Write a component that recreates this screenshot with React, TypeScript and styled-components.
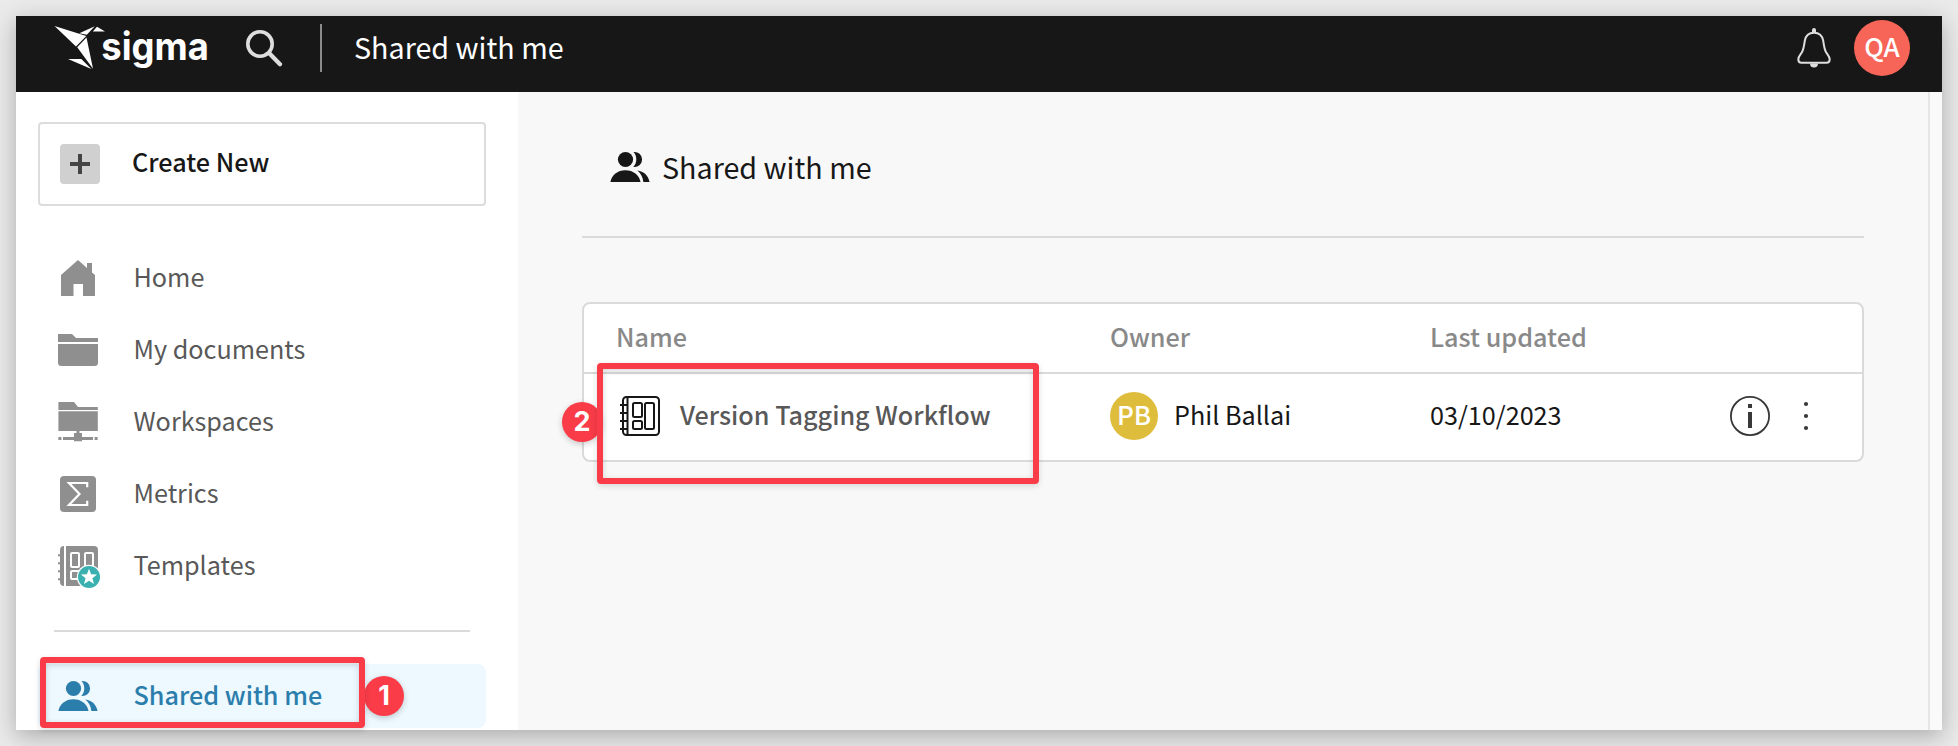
import React from "react";
import styled, { createGlobalStyle, css } from "styled-components";

const GlobalStyle = createGlobalStyle`
  *, *::before, *::after { box-sizing: border-box; }
  body {
    margin: 0;
    background: #eaeaea;
    color: #171717;
    font-family: "Noto Sans CJK SC", "Open Sans", sans-serif;
    font-size: 25.2px;
    line-height: 36px;
  }
  svg { display: block; flex: none; }
`;

const Page = styled.div`
  height: 746px;
  padding: 16px;
  overflow: hidden;
`;

const Window = styled.div`
  display: flex;
  flex-direction: column;
  height: 714px;
  background: #fff;
  box-shadow: 0 6px 22px rgba(0, 0, 0, 0.27);
`;

const TopBar = styled.header`
  display: flex;
  align-items: center;
  flex: none;
  height: 76px;
  padding: 0 32px 12px 38px;
  background: #171717;
  color: #fff;
`;

const Logo = styled.svg`
  margin-right: 30px;
  overflow: visible;
`;

const LogoText = styled.text`
  font-family: Inter, sans-serif;
  font-weight: 700;
  font-size: 38px;
  fill: #fff;
`;

const BarDivider = styled.div`
  width: 2px;
  height: 48px;
  margin: 0 32px 0 37px;
  background: #8b8b8b;
`;

const Title = styled.h1`
  margin: 0;
  padding-bottom: 3px;
  font-size: 28.7px;
  font-weight: 400;
  line-height: 42px;
`;

const PageTitle = styled(Title)`
  padding-bottom: 0;
`;

const Actions = styled.div`
  display: flex;
  align-items: center;
  gap: 23px;
  margin-left: auto;
`;

const Avatar = styled.div<{ $size: number; $color: string; $font: number }>`
  display: flex;
  align-items: center;
  justify-content: center;
  flex: none;
  width: ${(p) => p.$size}px;
  height: ${(p) => p.$size}px;
  padding-bottom: 4px;
  border-radius: 50%;
  background: ${(p) => p.$color};
  color: #fff;
  font-size: ${(p) => p.$font}px;
  font-weight: 500;
`;

const Body = styled.div`
  display: flex;
  flex: 1;
`;

const Sidebar = styled.aside`
  width: 502px;
  padding: 30px 32px 0 22px;
`;

const Label = styled.span`
  padding-bottom: 4px;
  white-space: nowrap;
`;

const CreateButton = styled.button`
  display: flex;
  align-items: center;
  gap: 32px;
  width: 100%;
  height: 84px;
  padding: 0 20px;
  border: 2px solid #dcdcdc;
  border-radius: 4px;
  background: #fff;
  color: #171717;
  font: inherit;
  font-weight: 500;

  ${Label} {
    padding-bottom: 6px;
  }
`;

const NavList = styled.nav`
  display: flex;
  flex-direction: column;
  gap: 8px;
  margin-top: 40px;
`;

const NavItem = styled.div<{ $active?: boolean }>`
  position: relative;
  display: flex;
  align-items: center;
  gap: 35.5px;
  height: 64px;
  padding-left: 20px;
  border-radius: 8px;
  color: #585858;
  ${(p) =>
    p.$active &&
    css`
      background: #edf8ff;
      color: #2b7eab;
      font-weight: 500;
    `}
`;

const Icon = styled.svg`
  overflow: visible;
`;

const NavDivider = styled.hr`
  height: 2px;
  margin: 32px 16px 32px;
  border: 0;
  background: #dadada;
`;

const Content = styled.main`
  flex: 1;
  padding: 48px 64px 0;
  border-right: 2px solid #e6e6e6;
  background: #f8f8f8;
`;

const Gutter = styled.div`
  width: 12px;
  background: #fafafa;
`;

const PageHead = styled.div`
  display: flex;
  align-items: center;
  gap: 12px;
  height: 98px;
  padding: 0 0 42px 28px;
  border-bottom: 2px solid #dadada;
`;

const Table = styled.div`
  margin-top: 64px;
  border: 2px solid #dadada;
  border-radius: 8px;
  background: #fff;
`;

const Row = styled.div<{ $head?: boolean }>`
  display: grid;
  grid-template-columns: 494px 320px 300px 1fr;
  align-items: center;
  padding-left: 32px;
  ${(p) =>
    p.$head
      ? css`
          height: 70px;
          border-bottom: 2px solid #dadada;
          color: #898989;
          font-weight: 500;
        `
      : css`
          height: 86px;
          padding-bottom: 2px;
        `}
`;

const Cell = styled.div<{ $gap: number; $indent?: number }>`
  position: relative;
  display: flex;
  align-items: center;
  gap: ${(p) => p.$gap}px;
  padding-left: ${(p) => p.$indent ?? 0}px;
`;

const DocName = styled(Label)`
  color: #585858;
  font-weight: 500;
`;

const Highlight = styled.div<{ $x: number; $y: number; $w: number; $h: number }>`
  position: absolute;
  left: ${(p) => p.$x}px;
  top: ${(p) => p.$y}px;
  width: ${(p) => p.$w}px;
  height: ${(p) => p.$h}px;
  border: 6px solid #f93c48;
  border-radius: 4px;
  box-shadow: 0 2px 6px rgba(0, 0, 0, 0.14), inset 0 2px 6px rgba(0, 0, 0, 0.16);
`;

const Step = styled.div<{ $x: number; $y: number }>`
  position: absolute;
  left: ${(p) => p.$x}px;
  top: ${(p) => p.$y}px;
  width: 40px;
  height: 40px;
  border-radius: 50%;
  background: #f93c48;
  box-shadow: 0 2px 6px rgba(0, 0, 0, 0.2);
  color: #fff;
  font: 700 27px/39px Inter, sans-serif;
  text-align: center;
`;

const PeopleIcon = () => (
  <Icon width="40" height="40" viewBox="0 0 40 40" fill="currentColor">
    <circle cx="15.500" cy="12.500" r="7.600" />
    <path d="M23.500 5.100a7.500 7.500 0 1 1-.2 14.800c2-2 3-4.500 3-7.400s-1-5.400-2.800-7.400Z" />
    <path d="M.4 35C1.600 28 7.500 23.200 15.400 23.200S29.300 28 30.500 35Z" />
    <path d="M27.300 23.400c6.500.6 11 5 12.300 11.600h-6.200c-.6-5-2.600-8.800-6.100-11.600Z" />
  </Icon>
);

const HomeIcon = () => (
  <Icon width="40" height="40" viewBox="0 0 40 40" fill="#8f8f8f">
    <path d="M3 17 20 2l9 8V5h5v9.500l3 2.500v21H25V26h-9.500v12H3Z" />
  </Icon>
);

const FolderIcon = () => (
  <Icon width="40" height="40" viewBox="0 0 40 40" fill="#8f8f8f">
    <path d="M0 4h14l4 4h22v4H0Z" />
    <path d="M0 14h40v18.500a3.500 3.500 0 0 1-3.500 3.500h-33A3.500 3.500 0 0 1 0 32.500Z" />
  </Icon>
);

const WorkspaceIcon = () => (
  <Icon width="40" height="40" viewBox="0 0 40 40" fill="#8f8f8f">
    <path d="M.4 0H16l4 5h19.800v3H.4Z" />
    <path d="M.4 9.300h39.400V29H.4Z" />
    <path d="M18.500 29h3v2H24v4h11v3H24v1.300h-8V38H5v-3h11v-4h2.500Z" />
    <path d="M.4 35h3v3h-3ZM36.600 35h3v3h-3Z" />
  </Icon>
);

const MetricsIcon = () => (
  <Icon width="40" height="40" viewBox="0 0 40 40">
    <rect x="2" y="2" width="36" height="36" rx="4" fill="#8f8f8f" />
    <path d="M29.200 13.300V9H11l10.500 11L11 31h18.200v-4.300" fill="none" stroke="#fff" strokeWidth="2.200" />
  </Icon>
);

const TemplatesIcon = () => (
  <Icon width="40" height="40" viewBox="0 0 40 40">
    <path
      d="M6 0v40a4 4 0 0 1-4-4v-1.800H0v-2h2v-6H0v-2h2v-6H0v-2h2v-6H0v-2h2V4a4 4 0 0 1 4-4ZM8 0h28a4 4 0 0 1 4 4v32a4 4 0 0 1-4 4H8Z"
      fill="#8f8f8f"
    />
    <g fill="none" stroke="#fff" strokeWidth="2">
      <rect x="13" y="7" width="8" height="14" rx="1" />
      <rect x="27" y="7" width="8" height="20" rx="1" />
      <rect x="13" y="25" width="8" height="8" rx="1" />
    </g>
    <circle cx="31" cy="31" r="12.200" fill="#fff" />
    <circle cx="31" cy="31" r="11" fill="#3ab1b0" />
    <path
      d="m31 22.800 2.100 5.500 5.900.3-4.600 3.700 1.600 5.700-5-3.300-5 3.300 1.600-5.700-4.600-3.700 5.900-.3Z"
      fill="#fff"
    />
  </Icon>
);

const WorkbookIcon = () => (
  <Icon width="40" height="40" viewBox="0 0 40 40" fill="none" stroke="#171717" strokeWidth="2">
    <rect x="3" y="1" width="36" height="38" rx="3.500" />
    <path d="M7.500 1v38M0 9h7M0 17h7M0 25h7M0 33h7" />
    <rect x="13" y="7" width="9" height="14" rx="1.500" />
    <rect x="25" y="7" width="9" height="26" rx="1.500" />
    <rect x="13" y="25" width="9" height="8" rx="1.500" />
  </Icon>
);

const SearchIcon = () => (
  <svg width="37" height="37" viewBox="0 0 37 37" fill="none" stroke="#dedede" strokeLinecap="round">
    <circle cx="14" cy="14" r="12.200" strokeWidth="3.600" />
    <path d="m23.500 23.500 10.500 10.800" strokeWidth="4.200" />
  </svg>
);

const BellIcon = () => (
  <svg width="34" height="40" viewBox="0 0 34 40" fill="none" stroke="#dedede">
    <path
      d="M17 4.700c-5.200 0-8.300 3-9.200 8-.8 5-1.100 8.300-2.600 11-1.300 2.500-3.900 4.500-3.900 7.600 0 2.300 1.100 3.500 3.200 3.500h25c2.100 0 3.200-1.200 3.200-3.500 0-3.100-2.600-5.100-3.900-7.600-1.500-2.700-1.800-6-2.600-11-.9-5-4-8-9.200-8Z"
      strokeWidth="2"
    />
    <path d="M15 4.500V2a2 2 0 0 1 4 0v2.500ZM13 35.500h8a4 4 0 0 1-8 0Z" fill="#dedede" stroke="none" />
  </svg>
);

const RowActions = () => (
  <svg width="82" height="40" viewBox="0 0 82 40" fill="#383838">
    <circle cx="20" cy="20" r="19.100" fill="none" stroke="#383838" strokeWidth="1.800" />
    <path d="M18 8h4v4h-4ZM18 16h4v16h-4Z" />
    <circle cx="76" cy="8" r="2.100" />
    <circle cx="76" cy="20" r="2.100" />
    <circle cx="76" cy="32" r="2.100" />
  </svg>
);

const PlusIcon = () => (
  <svg width="40" height="40" viewBox="0 0 40 40">
    <rect width="40" height="40" rx="4" fill="#d0d0d0" />
    <path d="M20 10v20M10 20h20" stroke="#444" strokeWidth="4" />
  </svg>
);

const SigmaLogo = () => (
  <Logo width="162" height="64" viewBox="0 -4 162 64" fill="#fff">
    <path d="m.5 6 31.800 10L22 26.500Z" />
    <path d="M32.500 17.500 39 48.800 23.200 27.300Z" />
    <path d="M14 39h13.300l10 10Z" />
    <path d="m25.300 13.200 15.500-7-8 8.600Z" />
    <path d="m43 6.800 8 4.800H38.800Z" />
    <LogoText x="47.300" y="40" textLength="107.500" lengthAdjust="spacingAndGlyphs">
      sigma
    </LogoText>
  </Logo>
);

const navItems: { label: string; icon: React.ReactNode }[] = [
  { label: "Home", icon: <HomeIcon /> },
  { label: "My documents", icon: <FolderIcon /> },
  { label: "Workspaces", icon: <WorkspaceIcon /> },
  { label: "Metrics", icon: <MetricsIcon /> },
  { label: "Templates", icon: <TemplatesIcon /> },
];

export default function App() {
  return (
    <Page>
      <GlobalStyle />
      <Window>
        <TopBar>
          <SigmaLogo />
          <SearchIcon />
          <BarDivider />
          <Title>Shared with me</Title>
          <Actions>
            <BellIcon />
            <Avatar $size={56} $color="#f66557" $font={26}>
              QA
            </Avatar>
          </Actions>
        </TopBar>
        <Body>
          <Sidebar>
            <CreateButton>
              <PlusIcon />
              <Label>Create New</Label>
            </CreateButton>
            <NavList>
              {navItems.map((item) => (
                <NavItem key={item.label}>
                  {item.icon}
                  <Label>{item.label}</Label>
                </NavItem>
              ))}
            </NavList>
            <NavDivider />
            <NavItem $active>
              <PeopleIcon />
              <Label>Shared with me</Label>
              <Step $x={326} $y={12}>
                1
              </Step>
              <Highlight $x={2} $y={-7} $w={325} $h={71} />
            </NavItem>
          </Sidebar>
          <Content>
            <PageHead>
              <PeopleIcon />
              <PageTitle as="h2">Shared with me</PageTitle>
            </PageHead>
            <Table>
              <Row $head>
                <Label>Name</Label>
                <Label>Owner</Label>
                <Label>Last updated</Label>
              </Row>
              <Row>
                <Cell $gap={20} $indent={4}>
                  <WorkbookIcon />
                  <DocName>Version Tagging Workflow</DocName>
                  <Step $x={-54} $y={6}>
                    2
                  </Step>
                  <Highlight $x={-19} $y={-33} $w={442} $h={121} />
                </Cell>
                <Cell $gap={16}>
                  <Avatar $size={48} $color="#dfbd3c" $font={26}>
                    PB
                  </Avatar>
                  <Label>Phil Ballai</Label>
                </Cell>
                <Label>03/10/2023</Label>
                <RowActions />
              </Row>
            </Table>
          </Content>
          <Gutter />
        </Body>
      </Window>
    </Page>
  );
}
